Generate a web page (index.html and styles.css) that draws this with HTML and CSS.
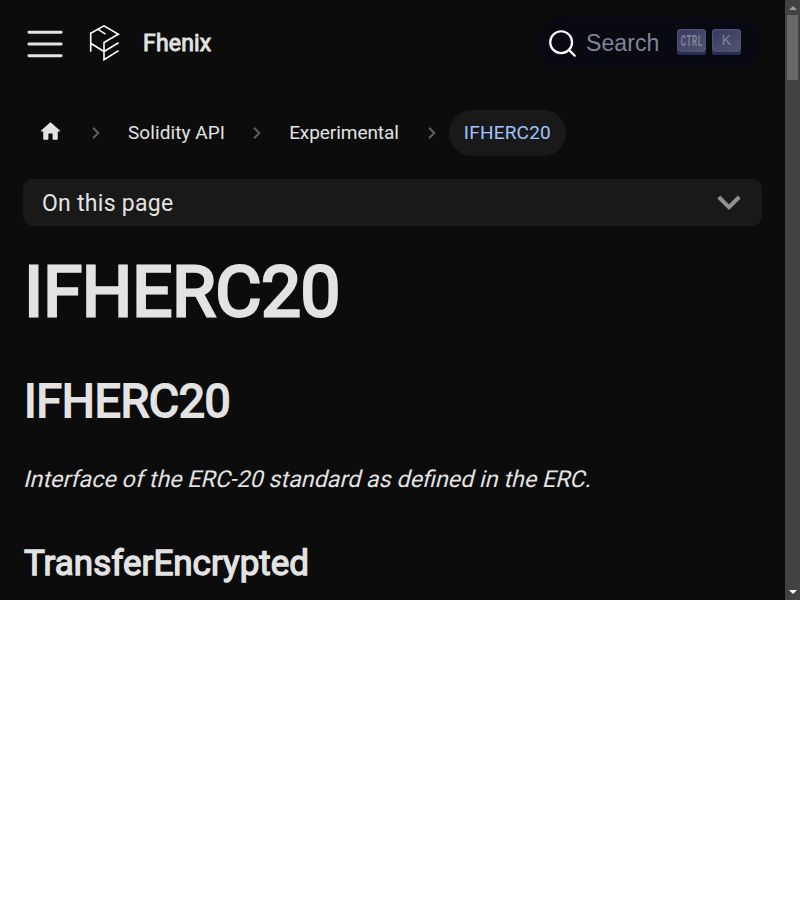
FILE: index.html
```html
<!DOCTYPE html>
<html lang="en">
<head>
<meta charset="utf-8">
<title>IFHERC20 | Fhenix</title>
<link rel="stylesheet" href="styles.css">
</head>
<body>
<div class="viewport">
  <div class="page">
    <header class="navbar">
      <svg class="menu" width="44" height="44" viewBox="0 0 30 30"><path stroke="currentColor" stroke-linecap="round" stroke-miterlimit="10" stroke-width="2" d="M4 7h22M4 15h22M4 23h22"/></svg>
      <svg class="logo" width="32" height="38" viewBox="0 0 32 38" fill="none" stroke="currentColor" stroke-width="1.6"><path d="M2.7 27.8V9.3L16 1.8L30.3 10.3L16 18.5V35.7L30.6 26.6M2.7 19.3L16 27.5L30.6 18.8M10 5.4L17.5 10.1"/></svg>
      <span class="brand">Fhenix</span>
      <button class="search">
        <svg width="29" height="29" viewBox="0 0 20 20" fill="none" stroke="#fff" stroke-width="1.5" stroke-linecap="round" stroke-linejoin="round"><path d="M14.386 14.386l4.0877 4.0877-4.0877-4.0877c-2.9418 2.9419-7.7115 2.9419-10.6533 0-2.9419-2.9418-2.9419-7.7115 0-10.6533 2.9418-2.9419 7.7115-2.9419 10.6533 0 2.9419 2.9418 2.9419 7.7115 0 10.6533z"/></svg>
        <span class="search-label">Search</span>
        <kbd><span class="ctrl">CTRL</span></kbd>
        <kbd>K</kbd>
      </button>
    </header>
    <main>
      <nav class="crumbs">
        <a class="home"><svg width="25" height="25" viewBox="0 0 24 24"><path fill="currentColor" d="M10 19v-5h4v5c0 .55.45 1 1 1h3c.55 0 1-.45 1-1v-7h1.700c.46 0 .68-.57.33-.87L12.670 3.600c-.38-.34-.96-.34-1.340 0l-8.360 7.530c-.34.300-.13.870.330.870H5v7c0 .55.45 1 1 1h3c.55 0 1-.45 1-1z"/></svg></a>
        <svg class="sep" width="8" height="14" viewBox="0 0 8 14"><path d="M1 1.700L6.300 7L1 12.300"/></svg>
        <a class="crumb">Solidity API</a>
        <svg class="sep" width="8" height="14" viewBox="0 0 8 14"><path d="M1 1.700L6.300 7L1 12.300"/></svg>
        <a class="crumb experimental">Experimental</a>
        <svg class="sep" width="8" height="14" viewBox="0 0 8 14"><path d="M1 1.700L6.300 7L1 12.300"/></svg>
        <span class="crumb current">IFHERC20</span>
      </nav>
      <div class="toc"><span>On this page</span><svg width="24" height="16" viewBox="0 0 24 16"><path d="M1.800 2L12 12.200L22.200 2" fill="none" stroke="#919191" stroke-width="4"/></svg></div>
      <h1>IFHERC20</h1>
      <h2>IFHERC20</h2>
      <p class="slanted">Interface of the ERC-20 standard as defined in the ERC.</p>
      <h3>TransferEncrypted</h3>
    </main>
  </div>
  <div class="scrollbar"><i class="up"></i><i class="thumb"></i><i class="down"></i></div>
</div>
</body>
</html>
```
FILE: styles.css
```css
* { box-sizing: border-box; }
body { margin: 0; background: #fff; font-family: Roboto, sans-serif; }
.viewport { display: flex; width: 800px; height: 600px; overflow: hidden; background: #0c0c0c; color: #e3e3e3; }
.page { width: 785px; }
.navbar { display: flex; align-items: center; height: 89px; padding: 0 23px 2px 23px; }
.menu { display: block; }
.logo { margin: -1px 0 0 21px; color: #fff; }
.brand { margin-left: 23px; font-size: 23px; line-height: 36px; letter-spacing: .2px; -webkit-text-stroke: .9px currentColor; }
.search { display: flex; align-items: center; width: 225px; height: 52px; margin: -1px 0 0 auto; padding: 0 0 0 11px; border: 0; border-radius: 26px; background: #090a11; color: #7f8497; }
.search-label { width: 82px; margin-left: 9px; font: 23px/36px "Liberation Sans", sans-serif; letter-spacing: .1px; text-align: left; }
kbd { display: flex; flex: none; align-items: center; justify-content: center; width: 29px; height: 26px; margin: -3px 6px 0 0; padding-bottom: 3px; border-radius: 4px; background: linear-gradient(-26deg, #565872, #36395f); box-shadow: inset 0 -3px #282d55, inset 0 0 1px 1px #51577d, 0 2px 3px #0505088a; color: #7f8497; font: 14px/20px "Liberation Sans", sans-serif; }
.ctrl { flex: none; font: 700 14px/20px Roboto, sans-serif; letter-spacing: .8px; margin: 2px -.8px 0 0; transform: scaleX(.58); }
.search-label + kbd { margin-left: 9px; }
main { padding: 21px 23px 0; }
.crumbs { display: flex; align-items: center; height: 46px; font-size: 19px; line-height: 30px; letter-spacing: .08px; }
.home { display: flex; margin: -3px 29px 0 15px; }
.sep { flex: none; fill: none; stroke: #606060; stroke-width: 2; }
.crumb { margin: -1px 28px 0; }
.experimental { margin-right: 29px; letter-spacing: -.06px; }
.current { height: 46px; width: 117px; margin: 0 0 0 13px; padding: 8px 0 8px 15px; border-radius: 23px; background: #191919; color: #a0c3ff; letter-spacing: .2px; }
.toc { display: flex; align-items: center; justify-content: space-between; height: 47px; margin-top: 23px; padding: 1px 21px 0 19px; border-radius: 10px; background: #191919; font-size: 23px; letter-spacing: .28px; }
h1, h2, h3, p { margin: 0; font-weight: 400; }
h1 { margin: 21px 0 0 1px; font-size: 71px; line-height: 90px; letter-spacing: -.4px; -webkit-text-stroke: 2.8px currentColor; }
h2 { margin: 34px 0 0 1px; font-size: 46.5px; line-height: 60px; letter-spacing: -.35px; -webkit-text-stroke: 1.8px currentColor; }
.slanted { width: max-content; margin: 30px 0 0 2px; font-size: 23.3px; line-height: 36px; transform: skewX(-14deg); }
h3 { margin: 44px 0 0 1px; font-size: 35px; line-height: 45px; letter-spacing: 0; -webkit-text-stroke: 1.3px currentColor; }
.scrollbar { display: flex; flex-direction: column; align-items: center; width: 15px; height: 600px; background: #424242; }
.up, .down { width: 0; height: 0; border: 4px solid transparent; }
.up { margin-top: 2px; border-bottom-color: #9b9b9b; }
.thumb { width: 11px; height: 65px; margin-top: 5px; background: #686868; }
.down { margin: auto 0 2px; border-top-color: #fff; }
```
